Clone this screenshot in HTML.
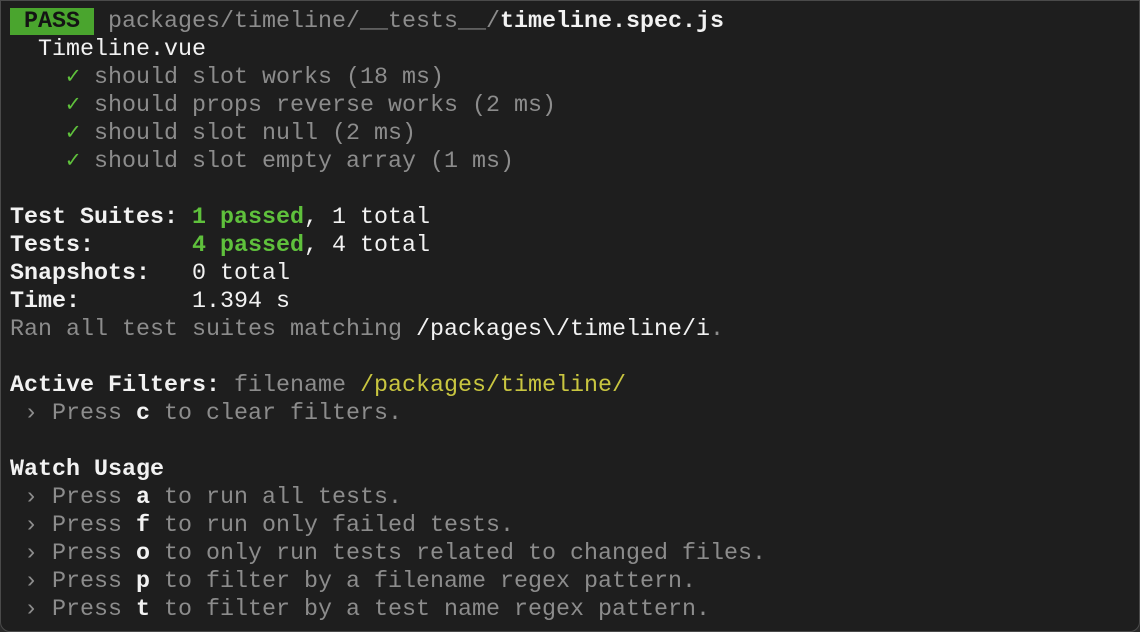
<!DOCTYPE html>
<html><head><style>
html,body{margin:0;padding:0;background:#2a2a2a;}
.win{position:absolute;left:0;top:0;width:1138px;height:630px;background:#1e1e1e;border:1px solid #4a4a4a;border-radius:0 0 10px 10px;overflow:hidden;}
pre{margin:0;position:absolute;left:9px;top:7px;font-family:"Liberation Mono",monospace;font-size:23.33px;line-height:28px;color:#8c8c8c;}
.w{color:#f2f2f2}
.b{color:#f2f2f2;font-weight:bold}
.g{color:#5fc13c;font-weight:bold}
.ck{color:#5fc13c}
.y{color:#c9c640}
.pass{background:#4aa52e;color:#141414;font-weight:bold;display:inline-block;height:27px;line-height:28px}
</style></head><body><div class="win"><pre><span class="pass"> PASS </span> packages/timeline/__tests__/<span class="b">timeline.spec.js</span>
  <span class="w">Timeline.vue</span>
    <span class="ck">✓</span> should slot works (18 ms)
    <span class="ck">✓</span> should props reverse works (2 ms)
    <span class="ck">✓</span> should slot null (2 ms)
    <span class="ck">✓</span> should slot empty array (1 ms)

<span class="b">Test Suites: </span><span class="g">1 passed</span><span class="w">, 1 total</span>
<span class="b">Tests:       </span><span class="g">4 passed</span><span class="w">, 4 total</span>
<span class="b">Snapshots:   </span><span class="w">0 total</span>
<span class="b">Time:        </span><span class="w">1.394 s</span>
Ran all test suites matching <span class="w">/packages\/timeline/i</span>.

<span class="b">Active Filters: </span>filename <span class="y">/packages/timeline/</span>
 › Press <span class="b">c</span> to clear filters.

<span class="b">Watch Usage</span>
 › Press <span class="b">a</span> to run all tests.
 › Press <span class="b">f</span> to run only failed tests.
 › Press <span class="b">o</span> to only run tests related to changed files.
 › Press <span class="b">p</span> to filter by a filename regex pattern.
 › Press <span class="b">t</span> to filter by a test name regex pattern.</pre></div></body></html>
